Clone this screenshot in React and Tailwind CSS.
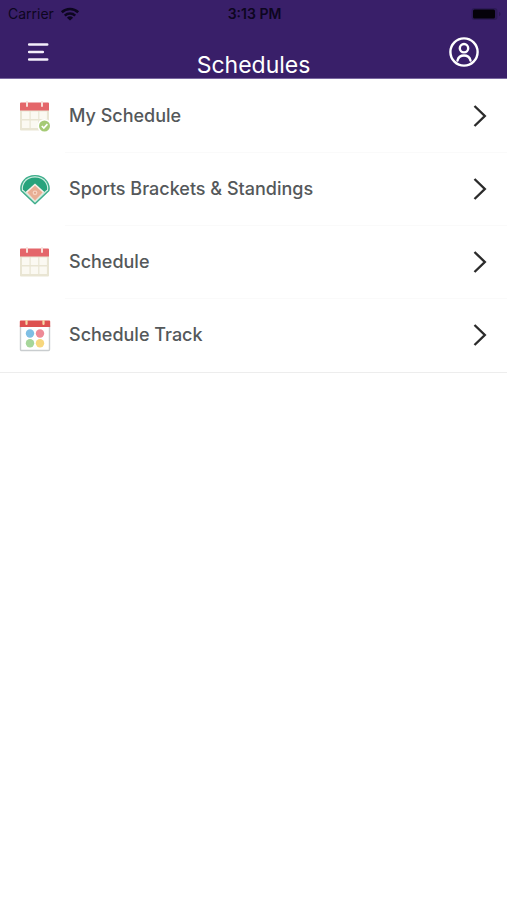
function WifiIcon() {
  return (
    <svg viewBox="0 0 20 14" className="h-[14px] w-5" fill="none" stroke="#0d0620" strokeWidth="2.6" aria-hidden="true">
      <path d="M1.8 5.2a12 12 0 0 1 16.4 0" />
      <path d="M4.8 8.6a7.6 7.6 0 0 1 10.4 0" />
      <path d="M10 13.6 6.9 10.7a4.6 4.6 0 0 1 6.2 0Z" fill="#0d0620" stroke="none" />
    </svg>
  );
}

function BatteryIcon() {
  return (
    <svg viewBox="0 0 30 14" className="h-[14px] w-[30px]" aria-hidden="true">
      <rect x="0.5" y="1" width="26" height="12" rx="3" fill="#2d1a57" />
      <rect x="2" y="2.5" width="22" height="9" rx="1.5" fill="#050209" />
      <path d="M28 5v4c1-.4 1.5-1.1 1.5-2S29 5.4 28 5Z" fill="#2b1853" />
    </svg>
  );
}

function MenuIcon() {
  return (
    <svg viewBox="0 0 22 20" className="h-5 w-[22px]" stroke="#f4effb" strokeWidth="2.6" strokeLinecap="round" aria-hidden="true">
      <path d="M2.2 2.5h18M2.2 10h13.600M2.2 17.500h18" />
    </svg>
  );
}

function ProfileIcon() {
  return (
    <svg viewBox="0 0 32 32" className="h-8 w-8" fill="none" stroke="#fff" strokeWidth="2.4" strokeLinecap="round" aria-hidden="true">
      <circle cx="16" cy="16" r="13.6" />
      <circle cx="16" cy="12.2" r="4.2" />
      <path d="M9.500 24.500c.8-3.400 3.400-5 6.500-5s5.700 1.600 6.500 5" />
    </svg>
  );
}

function CalendarBase() {
  return (
    <>
      <path d="M1 8h29v20.5a1 1 0 0 1-1 1H2a1 1 0 0 1-1-1Z" fill="#e9e5d3" />
      <g fill="#fbf9f2">
        <rect x="3" y="10.5" width="7.5" height="7.5" />
        <rect x="11.7" y="10.5" width="7.5" height="7.5" />
        <rect x="20.4" y="10.5" width="7.5" height="7.5" />
        <rect x="3" y="19.5" width="7.5" height="7.5" />
        <rect x="11.7" y="19.5" width="7.5" height="7.5" />
        <rect x="20.4" y="19.5" width="7.5" height="7.5" />
      </g>
      <path d="M1 2.5a1 1 0 0 1 1-1h27a1 1 0 0 1 1 1V9.5H1Z" fill="#e4666a" />
      <path d="M8 1v4M23 1v4" stroke="#f7dfd9" strokeWidth="2" strokeLinecap="round" />
    </>
  );
}

function CalendarIcon() {
  return (
    <svg viewBox="0 0 32 32" className="h-8 w-8" aria-hidden="true">
      <CalendarBase />
    </svg>
  );
}

function CalendarCheckIcon() {
  return (
    <svg viewBox="0 0 32 32" className="h-8 w-8" aria-hidden="true">
      <CalendarBase />
      <circle cx="25.5" cy="25" r="7" fill="#fff" />
      <circle cx="25.5" cy="25" r="5.5" fill="#a5ca75" />
      <path d="m22.8 25 2 2 3.6-3.8" fill="none" stroke="#fff" strokeWidth="1.7" />
    </svg>
  );
}

function BallparkIcon() {
  return (
    <svg viewBox="0 0 32 32" className="h-8 w-8" aria-hidden="true">
      <path d="M1.600 17C-.4 11 4.500 1 16 1s16.400 10 14.400 16L16.800 30a1.100 1.100 0 0 1-1.600 0Z" fill="#3fae8c" />
      <path d="M3 16.200C1.600 11 6 2.300 16 2.300S30.400 11 29 16.200L16 28.800Z" fill="#d6efe4" />
      <path d="M4 15.600C3 11 7 3.500 16 3.500S29 11 28 15.600L16 27.200Z" fill="#27a37c" />
      <path d="m16 9.500 9.500 8.500L16 27.500 6.500 18Z" fill="#f9efe8" />
      <path d="m16 11.500 7.700 7L16 26.500l-7.700-8Z" fill="#e8ae94" />
      <circle cx="16" cy="18.800" r="2.400" fill="#f6d3c2" />
      <circle cx="16" cy="18.800" r="1" fill="#dfa084" />
    </svg>
  );
}

function TrackIcon() {
  return (
    <svg viewBox="0 0 32 32" className="h-8 w-8" aria-hidden="true">
      <path d="M1.5 6h29v23.5a1 1 0 0 1-1 1h-27a1 1 0 0 1-1-1Z" fill="#fff" stroke="#c9cdcf" strokeWidth="1.4" />
      <path d="M.8 1.5a1 1 0 0 1 1-1h28.400a1 1 0 0 1 1 1V7H.8Z" fill="#dd5150" />
      <path d="M7.5.5V4M24.500.5V4" stroke="#f5d9a8" strokeWidth="2.2" strokeLinecap="round" />
      <circle cx="11" cy="13.500" r="4.200" fill="#7fbfe4" />
      <circle cx="21" cy="13.500" r="4.200" fill="#ee8b97" />
      <circle cx="11" cy="23.200" r="4.200" fill="#a6d69a" />
      <circle cx="21" cy="23.200" r="4.200" fill="#f7d77e" />
    </svg>
  );
}

function ChevronIcon() {
  return (
    <svg viewBox="0 0 14 24" className="h-6 w-[14px]" fill="none" stroke="#2b2b2b" strokeWidth="2.4" aria-hidden="true">
      <path d="M1.5 2 11.8 12 1.5 22" />
    </svg>
  );
}

const items = [
  { label: "My Schedule", Icon: CalendarCheckIcon },
  { label: "Sports Brackets & Standings", Icon: BallparkIcon },
  { label: "Schedule", Icon: CalendarIcon },
  { label: "Schedule Track", Icon: TrackIcon },
];

function Header() {
  return (
    <header className="border-b border-[#7a68a0] bg-[#391f69]">
      <div className="grid h-7 grid-cols-3 items-center pr-1.5 pl-2 text-sm text-[#0d0620]">
        <div className="flex items-center gap-1.5">
          <span>Carrier</span>
          <WifiIcon />
        </div>
        <span className="text-center font-semibold">3:13 PM</span>
        <div className="flex justify-end">
          <BatteryIcon />
        </div>
      </div>
      <div className="grid h-[50px] grid-cols-3 pr-[27px] pl-[27px]">
        <button type="button" aria-label="Menu" className="mt-3.5 self-start justify-self-start">
          <MenuIcon />
        </button>
        <h1 className="self-end text-center text-[23px] leading-[26px] text-white">Schedules</h1>
        <button type="button" aria-label="Profile" className="mt-2 self-start justify-self-end">
          <ProfileIcon />
        </button>
      </div>
    </header>
  );
}

export default function App() {
  return (
    <div className="min-h-screen bg-white font-['Inter',sans-serif]">
      <Header />
      <main>
        <ul className="grid min-h-[294px] auto-rows-fr border-b border-[#ededed] pt-px">
          {items.map(({ label, Icon }) => (
            <li key={label} className="group flex">
              <a href="#" className="flex flex-1 items-center pl-[19px]">
                <Icon />
                <span className="ml-3.5 flex flex-1 items-center justify-between self-stretch border-b border-[#fafafa] pr-5 pl-1 text-lg font-medium text-[#54585a] group-last:border-transparent">
                  {label}
                  <ChevronIcon />
                </span>
              </a>
            </li>
          ))}
        </ul>
      </main>
    </div>
  );
}
